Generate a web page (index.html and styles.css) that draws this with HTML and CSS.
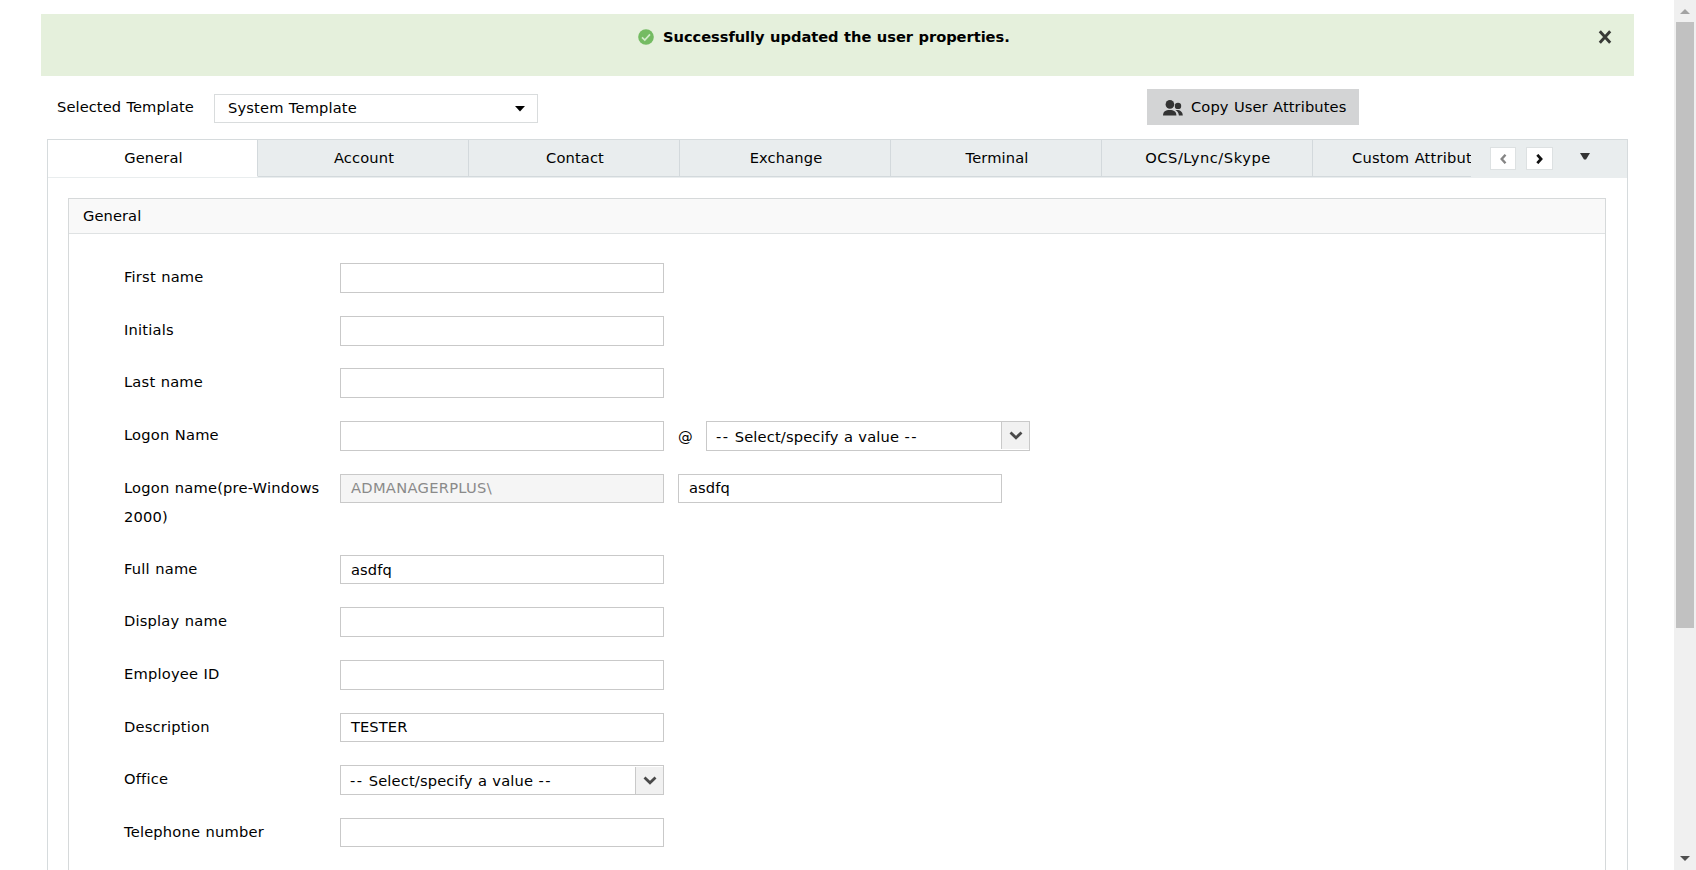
FILE: index.html
```html
<!DOCTYPE html>
<html lang="en">
<head>
<meta charset="utf-8">
<title>User properties</title>
<link rel="stylesheet" href="styles.css">
</head>
<body>
<div class="window">
  <main class="page">
    <div class="banner">
      <div class="banner-message">
        <svg class="ok-icon" width="16" height="16" viewBox="0 0 16 16"><circle cx="8" cy="8" r="7.8" fill="#74bb62"/><path d="M4 8.300l2.800 2.700L12 5.400" fill="none" stroke="#d2ebca" stroke-width="1.700"/></svg>
        <strong class="banner-text">Successfully updated the user properties.</strong>
      </div>
      <svg class="close" width="14" height="14" viewBox="0 0 14 14"><path d="M1.800 1.300l10.400 11.400M12.200 1.300L1.800 12.700" stroke="#383a36" stroke-width="2.900"/></svg>
    </div>

    <div class="toolbar">
      <span class="template-label">Selected Template</span>
      <div class="template-select"><span>System Template</span><svg width="10" height="6" viewBox="0 0 10 6"><path d="M0 0h10L5 5.600z" fill="#000"/></svg></div>
      <div class="copy-button">
        <svg width="20" height="16" viewBox="0 0 20 16" fill="#333"><ellipse cx="6.900" cy="4.400" rx="4.300" ry="4.300"/><path d="M0 15.400c0-3.600 2.600-5.400 6.700-5.400s6.700 1.800 6.700 5.400z"/><circle cx="15" cy="5.900" r="3.200"/><path d="M12.300 10.100c4.400-.6 7.400 1.400 7.500 5.300h-3.900c-.2-2.200-1.400-4.100-3.600-5.300z"/></svg>
        <span class="copy-text">Copy User Attributes</span>
      </div>
    </div>

    <section class="tabbed">
      <div class="tabbar">
        <div class="tabs">
          <div class="tab active">General</div>
          <div class="tab">Account</div>
          <div class="tab">Contact</div>
          <div class="tab">Exchange</div>
          <div class="tab">Terminal</div>
          <div class="tab wide">OCS/Lync/Skype</div>
          <div class="tab last">Custom Attributes</div>
        </div>
        <div class="pager prev"><svg width="8" height="10" viewBox="0 0 8 10"><path d="M6.500 .8L2.700 5 6.500 9.200" fill="none" stroke="#858585" stroke-width="2.400"/></svg></div>
        <div class="pager next"><svg width="8" height="10" viewBox="0 0 8 10"><path d="M1.300 .8L5.100 5 1.300 9.200" fill="none" stroke="#111" stroke-width="2.700"/></svg></div>
        <svg class="tab-menu" width="10" height="7" viewBox="0 0 10 7"><path d="M0 0h10L6 6.500H4z" fill="#333"/></svg>
      </div>

      <div class="panel">
        <h2 class="panel-title">General</h2>
        <div class="form">
          <div class="row"><label class="label">First name</label><div class="field"></div></div>
          <div class="row short"><label class="label">Initials</label><div class="field"></div></div>
          <div class="row"><label class="label">Last name</label><div class="field"></div></div>
          <div class="row"><label class="label">Logon Name</label><div class="field"></div><span class="at">@</span>
            <div class="combo"><span class="combo-text"><span class="dashes">--</span> Select/specify a value <span class="dashes">--</span></span><span class="combo-button"><svg width="14" height="9" viewBox="0 0 14 9"><path d="M1.500 1.500L7 6.700l5.500-5.200" fill="none" stroke="#4a4a4a" stroke-width="2.800"/></svg></span></div></div>
          <div class="row double"><label class="label">Logon name(pre-Windows 2000)</label><div class="field low disabled">ADMANAGERPLUS\</div><div class="field low second">asdfq</div></div>
          <div class="row short"><label class="label">Full name</label><div class="field low drop">asdfq</div></div>
          <div class="row"><label class="label">Display name</label><div class="field"></div></div>
          <div class="row"><label class="label">Employee ID</label><div class="field"></div></div>
          <div class="row short"><label class="label">Description</label><div class="field low">TESTER</div></div>
          <div class="row"><label class="label">Office</label>
            <div class="combo lower"><span class="combo-text"><span class="dashes">--</span> Select/specify a value <span class="dashes">--</span></span><span class="combo-button"><svg width="14" height="9" viewBox="0 0 14 9"><path d="M1.500 1.500L7 6.700l5.500-5.200" fill="none" stroke="#4a4a4a" stroke-width="2.800"/></svg></span></div></div>
          <div class="row"><label class="label">Telephone number</label><div class="field low"></div></div>
        </div>
      </div>
    </section>
  </main>

  <div class="scrollbar">
    <svg width="10" height="5" viewBox="0 0 10 5"><path d="M0 5h10L5 0z" fill="#a3a3a3"/></svg>
    <div class="thumb"></div>
    <svg class="down" width="10" height="5" viewBox="0 0 10 5"><path d="M0 0h10L5 5z" fill="#505050"/></svg>
  </div>
</div>
</body>
</html>
```
FILE: styles.css
```css
* { box-sizing: border-box; }
html, body { margin: 0; height: 100%; overflow: hidden; }
body {
  background: #fff;
  color: #000;
  font-family: Verdana, "DejaVu Sans", sans-serif;
  font-size: 14.67px;
  letter-spacing: 0.08px;
  word-spacing: 0.5px;
}
svg { display: block; flex: none; }
.window { display: flex; height: 870px; overflow: hidden; }
.page { flex: 1; padding: 14px 40px 0 41px; overflow: hidden; }

.banner {
  display: flex;
  align-items: flex-start;
  height: 62px;
  padding: 15px 22px 0 0;
  background: #e5f0dc;
}
.banner-message { display: flex; flex: 1; padding-left: 597px; gap: 9px; }
.banner-text { line-height: 15px; letter-spacing: -0.05px; white-space: nowrap; }
.close { margin-top: 1px; }

.toolbar { display: flex; height: 63px; padding: 13px 0 0 16px; }
.template-label { width: 157px; line-height: 35px; }
.template-select {
  display: flex;
  align-items: center;
  justify-content: space-between;
  width: 324px;
  height: 29px;
  margin-top: 5px;
  padding: 0 12px 0 13px;
  border: 1px solid #d9dcdd;
  line-height: 26px;
}
.template-select span { height: 27px; letter-spacing: 0.15px; }
.copy-button {
  display: flex;
  align-items: flex-start;
  gap: 8px;
  width: 212px;
  height: 36px;
  margin-left: 609px;
  padding-left: 16px;
  background: #d3d4d5;
  line-height: 35px;
  white-space: nowrap;
}
.copy-button svg { margin-top: 11px; }
.copy-text { letter-spacing: 0.11px; }

.tabbed {
  width: 1581px;
  height: 760px;
  margin-left: 6px;
  border: 1px solid #d6dbdd;
}
.tabbar { display: flex; height: 38px; background: #e9edee; }
.tabs { display: flex; width: 1423px; overflow: hidden; }
.tab {
  flex: none;
  width: 211px;
  height: 37px;
  padding-left: 2px;
  border-right: 1px solid #d3d9dc;
  border-bottom: 1px solid #d3d9dc;
  letter-spacing: 0.12px;
  line-height: 36px;
  text-align: center;
}
.tab.active { width: 210px; background: #fff; border-bottom-color: #fff; }
.tab.wide { letter-spacing: 0.54px; }
.tab.last { padding-left: 39px; letter-spacing: 0.19px; text-align: left; white-space: nowrap; }
.pager {
  display: flex;
  align-items: center;
  justify-content: center;
  width: 26px;
  height: 23px;
  margin-top: 7px;
  border: 1px solid #dde1e2;
  background: #fff;
}
.prev { margin-left: 19px; }
.next { width: 27px; margin-left: 10px; }
.tab-menu { margin: 13px 0 0 27px; }

.panel { width: 1538px; height: 700px; margin: 20px 0 0 20px; border: 1px solid #d6d9da; }
.panel-title {
  height: 35px;
  margin: 0;
  padding-left: 14px;
  border-bottom: 1px solid #dfe2e3;
  background: #f9f9f9;
  font-size: inherit;
  font-weight: normal;
  line-height: 33px;
}
.form { padding: 29px 0 0 55px; }
.row { display: flex; align-items: flex-start; height: 53px; }
.row.short { height: 52px; }
.row.double { height: 81px; }
.label { width: 216px; margin-top: -1px; padding-right: 10px; letter-spacing: 0.2px; line-height: 29px; }
.field {
  width: 324px;
  height: 30px;
  padding-left: 10px;
  border: 1px solid #c9c9c9;
  line-height: 26px;
}
.field.low { height: 29px; }
.field.drop { line-height: 28px; }
.field.disabled { background: #f5f5f5; color: #8a8a8a; letter-spacing: 0.3px; }
.field.second { margin-left: 14px; }
.at { width: 42px; padding-left: 14px; line-height: 31px; }
.combo {
  display: flex;
  width: 324px;
  height: 30px;
  border: 1px solid #c9c9c9;
}
.combo-text { flex: 1; padding-left: 9px; letter-spacing: 0.15px; line-height: 30px; white-space: nowrap; }
.dashes { letter-spacing: 1.4px; }
.combo-button {
  display: flex;
  justify-content: center;
  width: 28px;
  height: 27px;
  padding-top: 9px;
  border-left: 1px solid #c9c9c9;
  background: #f1f1f1;
}
.combo.lower .combo-button { margin-top: 1px; }

.scrollbar {
  display: flex;
  flex-direction: column;
  align-items: center;
  width: 22px;
  height: 870px;
  padding: 9px 0;
  background: #f0f0f0;
}
.thumb { width: 18px; height: 606px; margin-top: 8px; background: #c1c1c1; }
.down { margin-top: auto; }
```
